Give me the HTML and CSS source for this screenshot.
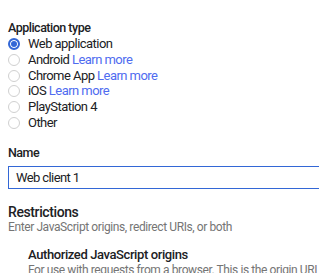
FILE: index.html
```html
<!DOCTYPE html>
<html lang="en">
<head>
  <meta charset="UTF-8" />
  <title>Create OAuth client ID</title>
  <link rel="stylesheet" href="styles.css">
</head>
<body>
  <main class="form">
    <section class="app-type">
      <div class="label">Application type</div>
      <label class="option"><span class="radio checked"></span>Web application</label>
      <label class="option"><span class="radio"></span>Android <a href="#">Learn more</a></label>
      <label class="option"><span class="radio"></span>Chrome App <a href="#">Learn more</a></label>
      <label class="option"><span class="radio"></span>iOS <a href="#">Learn more</a></label>
      <label class="option"><span class="radio"></span>PlayStation 4</label>
      <label class="option"><span class="radio"></span>Other</label>
    </section>

    <section class="name">
      <div class="label">Name</div>
      <div class="text-input">Web client 1</div>
    </section>

    <section class="restrictions">
      <h2>Restrictions</h2>
      <p class="hint">Enter JavaScript origins, redirect URIs, or both</p>
      <div class="sub">
        <h3>Authorized JavaScript origins</h3>
        <p class="hint">For use with requests from a browser. This is the origin URI of the client application.</p>
      </div>
    </section>
  </main>
</body>
</html>
```

FILE: styles.css
```css
:root {
  --blue: #3367d6;
  --link: #4f6cf0;
  --text: #202124;
  --subtext: #757575;
}
* { box-sizing: border-box; }
body {
  margin: 0;
  font-family: Roboto, 'Liberation Sans', sans-serif;
  letter-spacing: -0.4px;
  color: var(--text);
  background: #fff;
  overflow: hidden;
}
.form {
  padding: 16px 0 0 8px;
  width: 319px;
}
.label {
  font-size: 12.5px;
  font-weight: 500;
  letter-spacing: -0.5px;
  line-height: 16px;
}
.app-type .label {
  margin-top: 4px;
}
.option {
  display: block;
  font-size: 13px;
  letter-spacing: -0.55px;
  line-height: 15.8px;
  white-space: nowrap;
}
.option a {
  color: var(--link);
  text-decoration: none;
}
.radio {
  display: inline-block;
  vertical-align: -2px;
  width: 12px;
  height: 12px;
  margin-right: 8px;
  border-radius: 50%;
  border: 1px solid #d0d0d0;
}
.radio.checked {
  border: 2px solid var(--blue);
  background: var(--blue);
  box-shadow: inset 0 0 0 1px #fff;
}
.name {
  margin-top: 14px;
}
.text-input {
  margin-top: 5px;
  width: 330px;
  height: 23px;
  border: 1px solid var(--blue);
  padding: 0 7px;
  font-size: 13px;
  letter-spacing: -0.6px;
  line-height: 21px;
}
.restrictions h2 {
  margin: 15px 0 0;
  font-size: 14px;
  font-weight: 500;
  line-height: 16px;
}
.hint {
  margin: 0;
  font-size: 12px;
  color: var(--subtext);
  line-height: 15px;
  white-space: nowrap;
}
.sub {
  padding: 12px 0 0 20px;
}
.sub h3 {
  margin: 0;
  font-size: 13px;
  font-weight: 500;
  line-height: 16px;
}
```
